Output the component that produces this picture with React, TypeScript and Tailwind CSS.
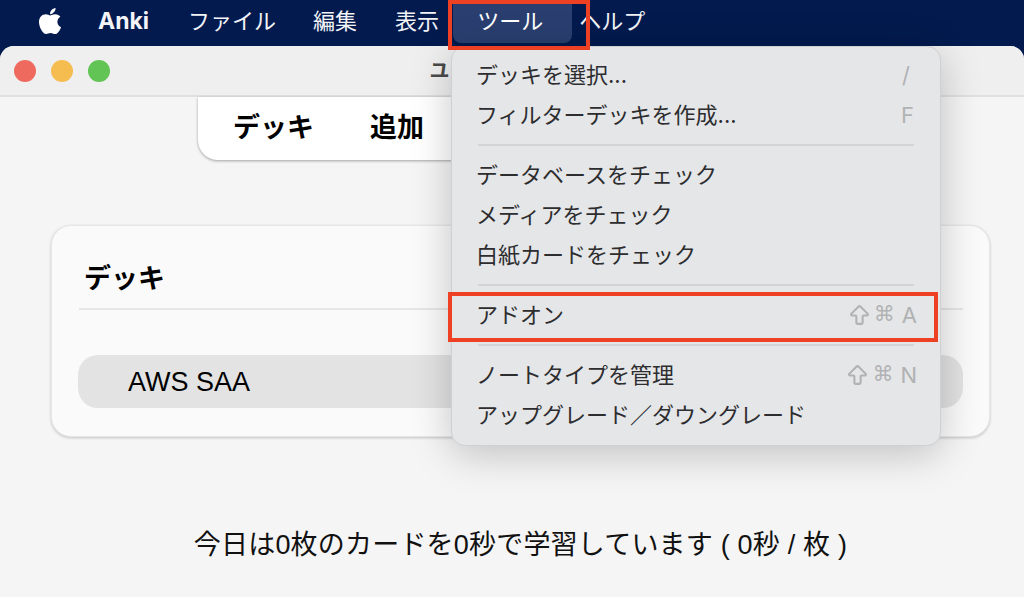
import { FaApple } from "react-icons/fa";
import { ArrowBigUp } from "lucide-react";

const JP = "font-['Inter','Noto_Sans_CJK_JP',sans-serif]";
const BODY = "font-['Liberation_Sans','Noto_Sans_CJK_JP',sans-serif]";

const Shortcut = ({ letter }: { letter: string }) => (
  <span className="flex items-center text-[#b1b2b4]">
    <ArrowBigUp className="mr-[2px] h-[25px] w-[25px]" strokeWidth={2} />
    <span className="font-['DejaVu_Sans',sans-serif] text-[21px]">⌘</span>
    <span className="ml-[7px]">{letter}</span>
  </span>
);

type RowProps = { label: string; children?: React.ReactNode };

const MenuRow = ({ label, children }: RowProps) => (
  <div className="flex h-10 items-center justify-between pl-[24px] pr-[23px]">
    <span>{label}</span>
    {children}
  </div>
);

const Divider = () => <div className="mx-[26px] my-[9px] h-[2px] bg-[#d3d4d6]" />;

const ToolsMenu = () => (
  <div className={`${JP} absolute left-[451px] top-[46px] z-10 w-[490px] rounded-[14px] border border-[#cfd0d2] bg-[#e5e6e8] pb-[10px] pt-[8px] text-[22px] text-[#2d2d2f] shadow-[0_8px_40px_rgba(0,0,0,0.22)]`}>
    <MenuRow label="デッキを選択...">
      <span className="mr-[7px] text-[#b1b2b4]">/</span>
    </MenuRow>
    <MenuRow label="フィルターデッキを作成...">
      <span className="mr-[3px] text-[#b1b2b4]">F</span>
    </MenuRow>
    <Divider />
    <MenuRow label="データベースをチェック" />
    <MenuRow label="メディアをチェック" />
    <MenuRow label="白紙カードをチェック" />
    <Divider />
    <MenuRow label="アドオン">
      <Shortcut letter="A" />
    </MenuRow>
    <Divider />
    <MenuRow label="ノートタイプを管理">
      <Shortcut letter="N" />
    </MenuRow>
    <MenuRow label="アップグレード／ダウングレード" />
  </div>
);

export default function App() {
  return (
    <div className={`${JP} relative flex h-[597px] w-[1024px] flex-col overflow-hidden bg-[#031a4e]`}>
      {/* Menu bar */}
      <header className="flex h-[46px] items-start text-[22px] text-[#f2f4f8]">
        <FaApple className="ml-[37px] mt-[6px] h-[30px] w-[26px] text-white" />
        <div className="ml-[35px] flex h-[42px] items-center text-[23px] font-bold">Anki</div>
        <div className="ml-[39px] flex h-[42px] items-center">ファイル</div>
        <div className="ml-[37px] flex h-[42px] items-center">編集</div>
        <div className="ml-[38px] flex h-[42px] items-center">表示</div>
        <div className="ml-[14px] flex h-[43px] w-[119px] items-center rounded-b-[8px] bg-[#2a3f70] pb-[1px] pl-[24px] text-white">ツール</div>
        <div className="ml-[7px] flex h-[42px] items-center">ヘルプ</div>
      </header>

      {/* Anki window */}
      <main className="flex flex-1 flex-col rounded-t-[14px] bg-[#f5f5f5]">
        <div className="flex h-[51px] items-center justify-center rounded-t-[14px] border-b-2 border-[#e0e0e0] bg-[#efefef]">
          <div className="absolute left-[14px] top-[60px] flex gap-[15px]">
            <span className="h-[22px] w-[22px] rounded-full bg-[#ee6a5f]" />
            <span className="h-[22px] w-[22px] rounded-full bg-[#f5bd4f]" />
            <span className="h-[22px] w-[22px] rounded-full bg-[#61c454]" />
          </div>
          <span className="text-[20px] font-semibold tracking-[0.7px] text-[#4a4a4a]">ユーザー 1 - Anki</span>
        </div>

        <nav className="ml-[198px] flex h-[63px] w-[628px] items-center rounded-b-[20px] bg-white pl-[35px] text-[27px] font-bold text-black shadow-[0_1px_3px_rgba(0,0,0,0.35)]">
          <span>デッキ</span>
          <span className="ml-[56px]">追加</span>
        </nav>

        <section className="ml-[51px] mr-[34px] mt-[65px] h-[212px] rounded-[20px] border border-[#e6e6e6] bg-[#fafafa] px-[26px] shadow-[0_1px_3px_rgba(0,0,0,0.2)]">
          <h2 className="ml-[1px] flex h-[84px] items-center border-b-2 border-[#e6e6e6] pl-[5px] pt-[24px] text-[27px] font-bold text-black">デッキ</h2>
          <div className={`${BODY} mt-[45px] flex h-[53px] items-center rounded-[20px] bg-[#e3e3e3] pl-[50px] pt-[2px] text-[27px] text-black`}>AWS SAA</div>
        </section>

        <p className={`${BODY} ml-[51px] mr-[34px] mt-[88px] text-center text-[27px] leading-[40px] tracking-[0.2px] text-[#111]`}>今日は0枚のカードを0秒で学習しています ( 0秒 / 枚 )</p>
      </main>

      <ToolsMenu />

      {/* Red annotation boxes */}
      <div className="absolute left-[448px] top-0 z-20 h-[50px] w-[142px] border-[4px] border-[#ee4023]" />
      <div className="absolute left-[448px] top-[292px] z-20 h-[50px] w-[490px] border-[4px] border-[#ee4023]" />
    </div>
  );
}
